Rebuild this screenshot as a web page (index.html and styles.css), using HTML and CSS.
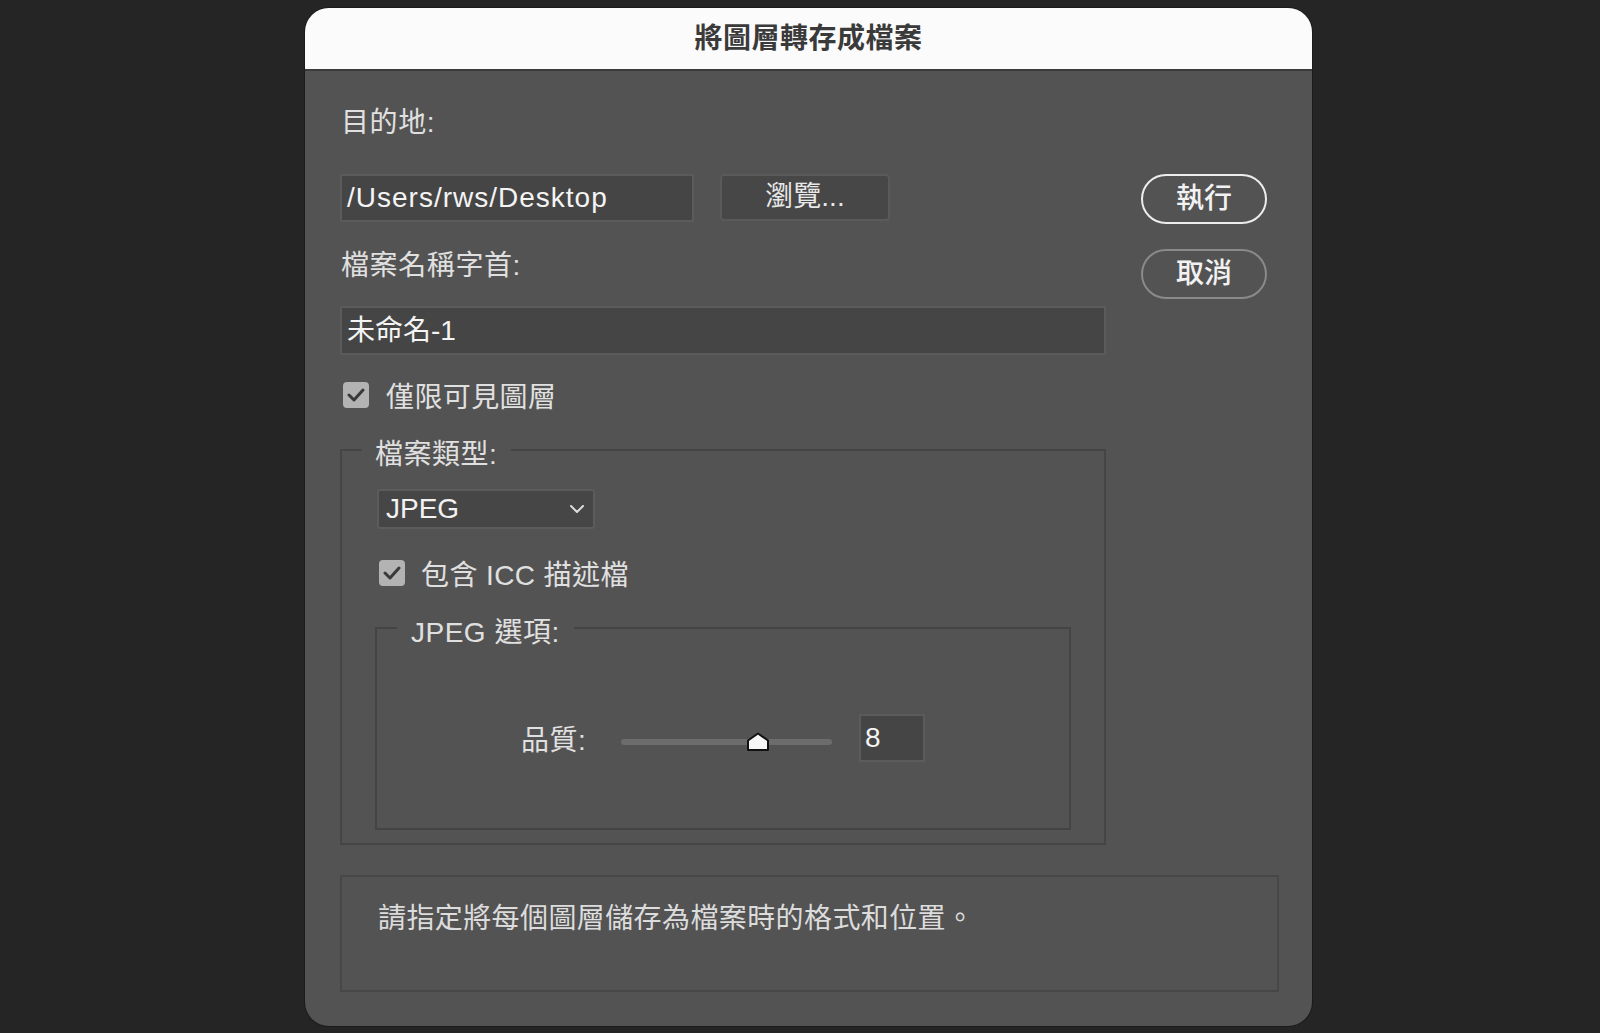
FILE: index.html
```html
<!DOCTYPE html>
<html lang="zh-Hant">
<head>
    <meta charset="UTF-8">
    <meta name="viewport" content="width=device-width, initial-scale=1.0">
    <title>將圖層轉存成檔案</title>
    <link rel="stylesheet" href="styles.css">
</head>
<body>

    <div class="dialog">
        <div class="titlebar">將圖層轉存成檔案</div>

        <div class="content">
            <div class="top">
                <div class="main">
                    <div class="label">目的地:</div>
                    <div class="path-row">
                        <div class="field path">/Users/rws/Desktop</div>
                        <div class="btn-browse">瀏覽...</div>
                    </div>

                    <div class="label label-prefix">檔案名稱字首:</div>
                    <div class="field name">未命名-1</div>

                    <label class="check-row visible-only">
                        <span class="checkbox">
                            <svg width="18" height="14" viewBox="0 0 18 14"><polyline points="2,7 7,12 16,2" fill="none" stroke="#3a3a3a" stroke-width="3" stroke-linecap="round" stroke-linejoin="round"/></svg>
                        </span>
                        僅限可見圖層
                    </label>

                    <!-- File type group -->
                    <fieldset class="group filetype">
                        <legend>檔案類型:</legend>

                        <div class="select">
                            <span>JPEG</span>
                            <svg width="14" height="8" viewBox="0 0 14 8"><polyline points="1,1 7,7 13,1" fill="none" stroke="#dcdcdc" stroke-width="2" stroke-linecap="round" stroke-linejoin="round"/></svg>
                        </div>

                        <label class="check-row icc">
                            <span class="checkbox">
                                <svg width="18" height="14" viewBox="0 0 18 14"><polyline points="2,7 7,12 16,2" fill="none" stroke="#3a3a3a" stroke-width="3" stroke-linecap="round" stroke-linejoin="round"/></svg>
                            </span>
                            包含 ICC 描述檔
                        </label>

                        <fieldset class="group jpeg-opts">
                            <legend>JPEG 選項:</legend>
                            <div class="quality-row">
                                <span class="quality-label">品質:</span>
                                <div class="slider">
                                    <div class="track"></div>
                                    <!-- thumb sits over the track -->
                                    <svg class="thumb" width="24" height="20" viewBox="0 0 24 20"><path d="M2,18 L2,8.5 L12,1.5 L22,8.5 L22,18 Z" fill="#f7f7f7" stroke="#111" stroke-width="2" stroke-linejoin="round"/></svg>
                                </div>
                                <div class="field num">8</div>
                            </div>
                        </fieldset>
                    </fieldset>
                </div>

                <div class="side">
                    <div class="pill primary">執行</div>
                    <div class="pill">取消</div>
                </div>
            </div>

            <div class="hint">請指定將每個圖層儲存為檔案時的格式和位置。</div>
        </div>
    </div>

</body>
</html>
```

FILE: styles.css
```css
* {
    box-sizing: border-box;
}

body {
    margin: 0;
    padding-top: 8px;
    background-color: #252525;
    font-family: "Liberation Sans", "Noto Sans CJK TC", sans-serif;
    font-size: 28px;
    color: #e0e0e0;
    height: 1033px;
    overflow: hidden;
}

.dialog {
    width: 1007px;
    height: 1018px;
    margin-left: 305px;
    background-color: #535353;
    border-radius: 24px;
    overflow: hidden;
    box-shadow: 0 0 0 1px #1b1b1b;
}

.titlebar {
    height: 63px;
    line-height: 62px;
    background-color: #fbfbfb;
    border-bottom: 2px solid #3c3c3c;
    text-align: center;
    font-weight: bold;
    color: #3a3a3a;
    letter-spacing: 0.5px;
}

.content {
    padding: 32px 33px 0 35px;
}

.top {
    display: flex;
}

.main {
    width: 766px;
}

.label {
    line-height: 34px;
    padding-top: 3px;
    padding-left: 1px;
    letter-spacing: 0.6px;
}

.label-prefix {
    margin-top: 24px;
}

/* Text fields */
.field {
    background-color: #454545;
    border: 2px solid #5b5b5b;
    color: #f4f4f4;
    line-height: 44px;
    padding: 0 5px;
    white-space: nowrap;
}

.path-row {
    display: flex;
    gap: 26px;
    margin-top: 34px;
}

.field.path {
    width: 354px;
    height: 48px;
    letter-spacing: 1px;
}

.btn-browse {
    width: 170px;
    height: 47px;
    background-color: #474747;
    border: 2px solid #5a5a5a;
    border-radius: 4px;
    text-align: center;
    line-height: 42px;
    color: #e8e8e8;
}

.field.name {
    margin-top: 23px;
    height: 49px;
    line-height: 45px;
}

/* Checkboxes */
.check-row {
    display: flex;
    align-items: center;
    gap: 17px;
    height: 34px;
    letter-spacing: 0.4px;
}

.checkbox {
    width: 26px;
    height: 26px;
    border-radius: 4px;
    background-color: #b3b3b3;
    display: flex;
    align-items: center;
    justify-content: center;
}

.visible-only {
    margin-top: 23px;
    margin-left: 3px;
}

/* Groups */
.group {
    margin: 0;
    padding: 0;
    min-width: 0;
    border: 2px solid #454545;
}

.group legend {
    line-height: 34px;
    margin-left: 20px;
    padding: 10px 14px 0 13px;
    letter-spacing: 0.5px;
}

.filetype {
    margin-top: 16px;
    padding-bottom: 13px;
}

.select {
    width: 218px;
    height: 40px;
    margin: 17px 0 0 35px;
    background-color: #464646;
    border: 2px solid #5c5c5c;
    border-radius: 3px;
    padding: 0 9px 0 7px;
    display: flex;
    align-items: center;
    justify-content: space-between;
    color: #f2f2f2;
}

.icc {
    margin-top: 27px;
    margin-left: 37px;
    gap: 16px;
}

.jpeg-opts {
    margin: 16px 33px 0 33px;
    border-color: #444;
}

.jpeg-opts legend {
    padding: 10px 14px 0 14px;
}

.quality-row {
    display: flex;
    justify-content: center;
    align-items: center;
    margin-top: 64px;
    margin-bottom: 66px;
    height: 48px;
}

.quality-label {
    width: 66px;
    white-space: nowrap;
    letter-spacing: 0.5px;
}

.slider {
    position: relative;
    width: 211px;
    height: 20px;
    margin: 8px 27px 0 34px;
    display: flex;
    align-items: center;
}

.track {
    flex: 1;
    height: 6px;
    border-radius: 3px;
    background-color: #6c6c6c;
}

.thumb {
    position: absolute;
    left: 125px;
    top: 0;
}

.field.num {
    width: 66px;
    height: 48px;
    padding-left: 4px;
}

/* Right column buttons */
.side {
    margin-left: auto;
    margin-right: 12px;
    padding-top: 71px;
    display: flex;
    flex-direction: column;
    gap: 25px;
}

.pill {
    width: 126px;
    height: 50px;
    border: 2px solid #8a8a8a;
    border-radius: 25px;
    text-align: center;
    line-height: 45px;
    font-weight: 500;
    color: #f2f2f2;
}

.pill.primary {
    border-color: #ededed;
}

.hint {
    margin-top: 30px;
    height: 117px;
    border: 2px solid #474747;
    padding: 25px 36px 0;
    line-height: 34px;
    color: #dcdcdc;
    letter-spacing: 0.4px;
}
```
